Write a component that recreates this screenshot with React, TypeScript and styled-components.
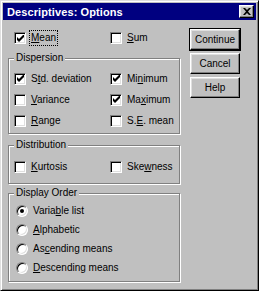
import React from 'react'
import styled, { createGlobalStyle } from 'styled-components'

const GlobalStyle = createGlobalStyle`
  html, body {
    margin: 0;
    padding: 0;
    background: #c0c0c0;
  }
  body {
    font-family: 'Liberation Sans', Arial, sans-serif;
    font-size: 10px;
    color: #000;
  }
`

const Window = styled.div`
  width: 259px;
  height: 291px;
  box-sizing: border-box;
  background: #c0c0c0;
  border: 1px solid;
  border-color: #dfdfdf #000 #000 #dfdfdf;
  box-shadow: inset 1px 1px 0 #fff, inset -1px -1px 0 #808080;
  padding: 2px;
  display: flex;
  flex-direction: column;
`

const TitleBar = styled.div`
  height: 17px;
  background: #000080;
  display: flex;
  align-items: center;
  justify-content: space-between;
  padding-left: 4px;
`

const TitleText = styled.span`
  color: #fff;
  font-weight: bold;
  font-size: 11px;
  letter-spacing: 0.1px;
`

const CloseButton = styled.div`
  width: 15px;
  height: 13px;
  margin-right: 2px;
  box-sizing: border-box;
  background: #c0c0c0;
  border: 1px solid;
  border-color: #fff #000 #000 #fff;
  box-shadow: inset -1px -1px 0 #808080, inset 1px 1px 0 #dfdfdf;
  display: flex;
  align-items: center;
  justify-content: center;
`

const Body = styled.div`
  display: flex;
  padding: 8px 0 0 5px;
`

const LeftColumn = styled.div`
  width: 172px;
  display: flex;
  flex-direction: column;
`

const TopRow = styled.div`
  display: grid;
  grid-template-columns: 96px 1fr;
  height: 20px;
  padding-left: 6px;
  margin-bottom: 4px;
`

const Group = styled.fieldset<{ $pt: number; $pb: number; $mb: number }>`
  margin: 0 0 ${({ $mb }) => $mb}px 0;
  min-width: 0;
  padding: ${({ $pt }) => $pt}px 0 ${({ $pb }) => $pb}px 5px;
  border: 1px solid #808080;
  box-shadow: inset 1px 1px 0 #fff, 1px 1px 0 #fff;
`

const Legend = styled.legend`
  padding: 0 2px;
  margin: 0;
  line-height: 12px;
  font-size: 10px;
  background: #c0c0c0;
`

const Grid = styled.div<{ $row: number; $cols?: string; $pl?: number }>`
  display: grid;
  grid-template-columns: ${({ $cols }) => $cols ?? '96px 1fr'};
  grid-auto-rows: ${({ $row }) => $row}px;
  padding-left: ${({ $pl }) => $pl ?? 0}px;
`

const Item = styled.div`
  display: flex;
  align-items: center;
  white-space: nowrap;
`

const Box = styled.span<{ $round?: boolean }>`
  width: 12px;
  height: 12px;
  flex: none;
  box-sizing: border-box;
  background: #fff;
  border: 1px solid;
  border-color: #808080 #fff #fff #808080;
  box-shadow: inset 1px 1px 0 #000, inset -1px -1px 0 #dfdfdf;
  border-radius: ${({ $round }) => ($round ? '50%' : '0')};
  display: flex;
  align-items: center;
  justify-content: center;
`

const Dot = styled.span`
  width: 4px;
  height: 4px;
  border-radius: 50%;
  background: #000;
`

const Label = styled.span<{ $focus?: boolean }>`
  margin-left: ${({ $focus }) => ($focus ? 4 : 5)}px;
  padding: ${({ $focus }) => ($focus ? '1px 1px' : '0')};
  outline: ${({ $focus }) => ($focus ? '1px dotted #000' : 'none')};
  line-height: 12px;
`

const Key = styled.span`
  text-decoration: underline;
`

const ButtonColumn = styled.div`
  display: flex;
  flex-direction: column;
  gap: 3px;
  margin: 1px 0 0 10px;
`

const Button = styled.div<{ $default?: boolean }>`
  width: 50px;
  height: 21px;
  box-sizing: border-box;
  border: 1px solid;
  border-color: #fff #000 #000 #fff;
  box-shadow: inset -1px -1px 0 #808080, inset 1px 1px 0 #dfdfdf
    ${({ $default }) => ($default ? ', 0 0 0 1px #000' : '')};
  display: flex;
  align-items: center;
  justify-content: center;
  font-size: 10px;
`

function Check({ checked }: { checked?: boolean }) {
  return (
    <Box>
      {checked && (
        <svg width="7" height="7" viewBox="0 0 7 7">
          <polygon points="0,2 2,4 7,-1 7,2 2,7 0,5" fill="#000" />
        </svg>
      )}
    </Box>
  )
}

function CheckItem({ checked, focus, children }: { checked?: boolean; focus?: boolean; children: React.ReactNode }) {
  return (
    <Item>
      <Check checked={checked} />
      <Label $focus={focus}>{children}</Label>
    </Item>
  )
}

function RadioItem({ selected, children }: { selected?: boolean; children: React.ReactNode }) {
  return (
    <Item>
      <Box $round>{selected && <Dot />}</Box>
      <Label>{children}</Label>
    </Item>
  )
}

export default function App() {
  return (
    <>
      <GlobalStyle />
      <Window>
        <TitleBar>
          <TitleText>Descriptives: Options</TitleText>
          <CloseButton>
            <svg width="8" height="7" viewBox="0 0 8 7">
              <path d="M0 0h2l2 2 2-2h2L5 3.5 8 7H6L4 5 2 7H0l3-3.5z" fill="#000" />
            </svg>
          </CloseButton>
        </TitleBar>
        <Body>
          <LeftColumn>
            <TopRow>
              <CheckItem checked focus>
                <Key>M</Key>ean
              </CheckItem>
              <CheckItem>
                <Key>S</Key>um
              </CheckItem>
            </TopRow>

            <Group $pt={4} $pb={2} $mb={5}>
              <Legend>Dispersion</Legend>
              <Grid $row={21}>
                <CheckItem checked>
                  S<Key>t</Key>d. deviation
                </CheckItem>
                <CheckItem checked>
                  Mi<Key>n</Key>imum
                </CheckItem>
                <CheckItem>
                  <Key>V</Key>ariance
                </CheckItem>
                <CheckItem checked>
                  Ma<Key>x</Key>imum
                </CheckItem>
                <CheckItem>
                  <Key>R</Key>ange
                </CheckItem>
                <CheckItem>
                  S.<Key>E</Key>. mean
                </CheckItem>
              </Grid>
            </Group>

            <Group $pt={5} $pb={6} $mb={3}>
              <Legend>Distribution</Legend>
              <Grid $row={21}>
                <CheckItem>
                  <Key>K</Key>urtosis
                </CheckItem>
                <CheckItem>
                  Ske<Key>w</Key>ness
                </CheckItem>
              </Grid>
            </Group>

            <Group $pt={2} $pb={4} $mb={0}>
              <Legend>Display Order</Legend>
              <Grid $row={19} $cols="1fr" $pl={2}>
                <RadioItem selected>
                  Varia<Key>b</Key>le list
                </RadioItem>
                <RadioItem>
                  <Key>A</Key>lphabetic
                </RadioItem>
                <RadioItem>
                  As<Key>c</Key>ending means
                </RadioItem>
                <RadioItem>
                  <Key>D</Key>escending means
                </RadioItem>
              </Grid>
            </Group>
          </LeftColumn>

          <ButtonColumn>
            <Button $default>Continue</Button>
            <Button>Cancel</Button>
            <Button>Help</Button>
          </ButtonColumn>
        </Body>
      </Window>
    </>
  )
}
